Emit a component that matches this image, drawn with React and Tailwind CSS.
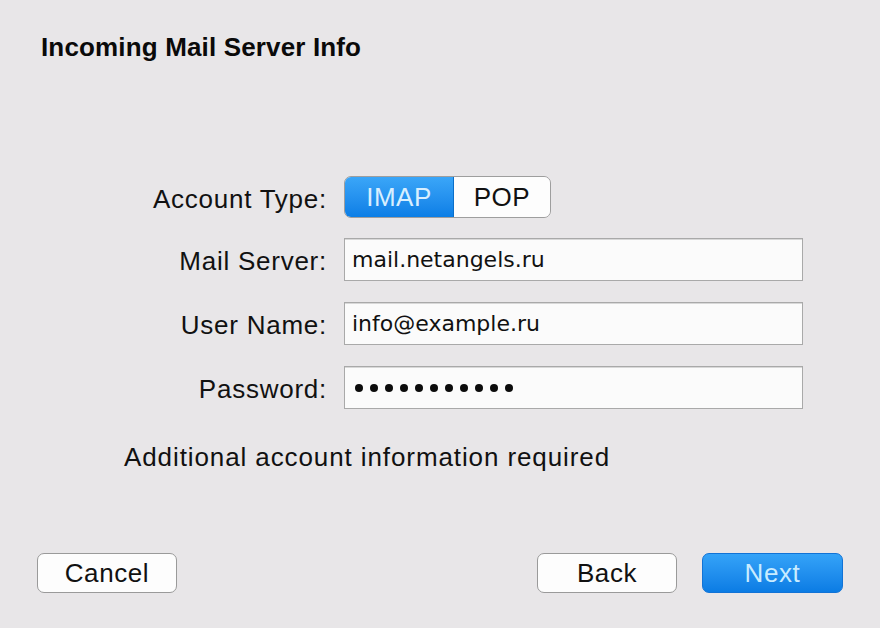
import React from "react";

const sans = { fontFamily: '"Liberation Sans", Arial, sans-serif' };

export default function App() {
  const label = "text-right text-[26px] tracking-[0.75px] text-[#111] leading-none pt-[3px]";
  const input =
    "h-[43px] bg-[#fbfbfb] border border-[#a9a9a9] shadow-[inset_0_1px_0_#d8d8d8] flex items-center pl-[7px] text-[22px] text-[#111]";
  const btn =
    "w-[140px] h-[40px] rounded-[7px] border border-[#9a9a9a] bg-[#fdfdfd] text-[26px] tracking-[0.6px] text-[#111]";
  return (
    <div
      className="w-[880px] h-[628px] bg-[#e8e6e8] flex flex-col overflow-hidden"
      style={sans}
    >
      <div className="pl-[41px] pt-[34px] text-[26px] font-bold tracking-[0.15px] text-[#0a0a0a] leading-none">
        Incoming Mail Server Info
      </div>

      <div className="mt-[116px] grid grid-cols-[327px_459px] gap-x-[17px] items-center">
        <div className={label}>Account Type:</div>
        <div className="flex">
          <div className="flex h-[42px] w-[207px] rounded-[7px] border border-[#9e9e9e] overflow-hidden">
            <div className="w-[109px] flex items-center justify-center bg-gradient-to-b from-[#3aa6f8] to-[#0a7ee6] text-[#d8efff] text-[26px] tracking-[0.5px] border-r border-[#0b6fc9]">
              IMAP
            </div>
            <div className="flex-1 flex items-center justify-center bg-[#fdfdfd] text-[#111] text-[26px] tracking-[0.5px]">
              POP
            </div>
          </div>
        </div>

        <div className={label + " mt-[20px]"}>Mail Server:</div>
        <div className={input + " mt-[20px]"} style={{ fontFamily: '"DejaVu Sans", sans-serif' }}>
          mail.netangels.ru
        </div>

        <div className={label + " mt-[21px]"}>User Name:</div>
        <div className={input + " mt-[21px]"} style={{ fontFamily: '"DejaVu Sans", sans-serif' }}>
          info@example.ru
        </div>

        <div className={label + " mt-[21px]"}>Password:</div>
        <div className={input + " mt-[21px] gap-[7px] pl-[10px]"}>
          {Array.from({ length: 11 }).map((_, i) => (
            <div key={i} className="w-[8px] h-[8px] rounded-full bg-[#0c0c0c]" />
          ))}
        </div>
      </div>

      <div className="mt-[35px] pl-[124px] text-[26px] tracking-[0.9px] text-[#111] leading-none">
        Additional account information required
      </div>

      <div className="mt-[83px] flex items-center px-[37px]">
        <button className={btn}>Cancel</button>
        <div className="flex-1" />
        <button className={btn}>Back</button>
        <button className="ml-[25px] w-[141px] h-[40px] rounded-[7px] border border-[#1173d6] bg-gradient-to-b from-[#34a3f8] to-[#0a7ce4] text-[26px] tracking-[0.6px] text-[#c9ecff]">
          Next
        </button>
      </div>
    </div>
  );
}
